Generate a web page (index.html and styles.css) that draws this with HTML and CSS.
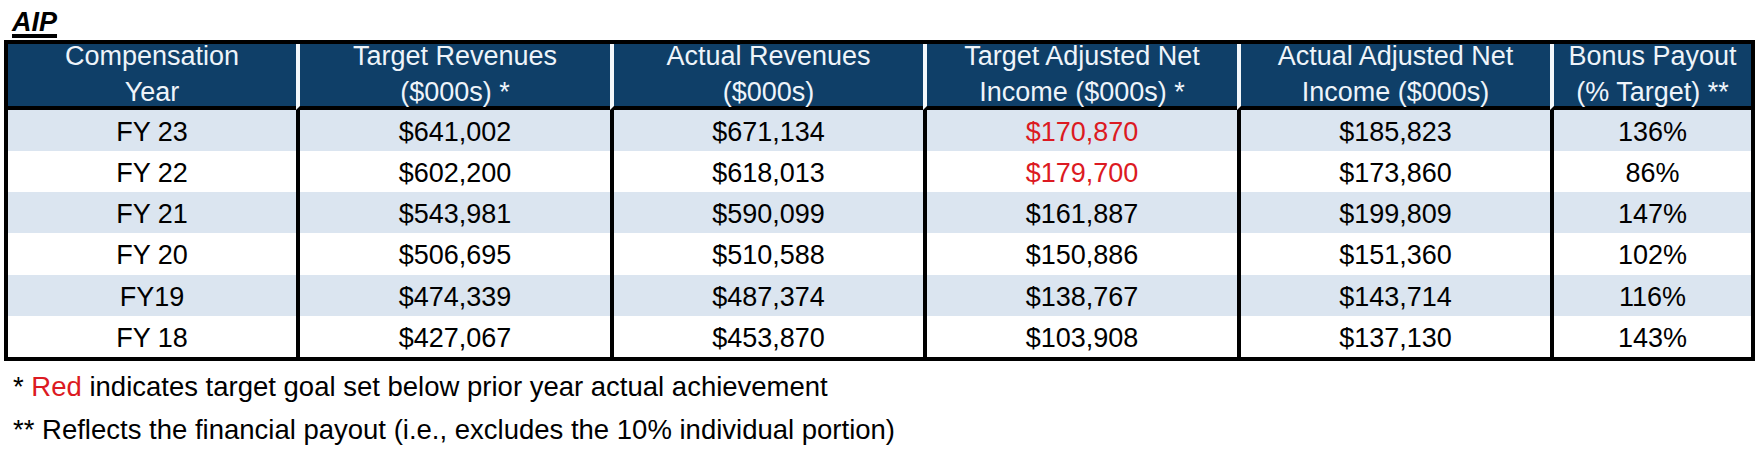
FILE: index.html
```html
<!DOCTYPE html>
<html>
<head>
<meta charset="utf-8">
<link rel="stylesheet" href="styles.css">
</head>
<body>
<div class="page">
  <div class="title">AIP</div>
  <div class="table">
    <div class="th">Compensation<br>Year</div>
    <div class="th sep">Target Revenues<br>($000s) *</div>
    <div class="th sep">Actual Revenues<br>($000s)</div>
    <div class="th sep">Target Adjusted Net<br>Income ($000s) *</div>
    <div class="th sep">Actual Adjusted Net<br>Income ($000s)</div>
    <div class="th sep">Bonus Payout<br>(% Target) **</div>

    <div class="td alt">FY 23</div>
    <div class="td alt sep">$641,002</div>
    <div class="td alt sep">$671,134</div>
    <div class="td alt sep red">$170,870</div>
    <div class="td alt sep">$185,823</div>
    <div class="td alt sep">136%</div>

    <div class="td">FY 22</div>
    <div class="td sep">$602,200</div>
    <div class="td sep">$618,013</div>
    <div class="td sep red">$179,700</div>
    <div class="td sep">$173,860</div>
    <div class="td sep">86%</div>

    <div class="td alt">FY 21</div>
    <div class="td alt sep">$543,981</div>
    <div class="td alt sep">$590,099</div>
    <div class="td alt sep">$161,887</div>
    <div class="td alt sep">$199,809</div>
    <div class="td alt sep">147%</div>

    <div class="td">FY 20</div>
    <div class="td sep">$506,695</div>
    <div class="td sep">$510,588</div>
    <div class="td sep">$150,886</div>
    <div class="td sep">$151,360</div>
    <div class="td sep">102%</div>

    <div class="td alt">FY19</div>
    <div class="td alt sep">$474,339</div>
    <div class="td alt sep">$487,374</div>
    <div class="td alt sep">$138,767</div>
    <div class="td alt sep">$143,714</div>
    <div class="td alt sep">116%</div>

    <div class="td">FY 18</div>
    <div class="td sep">$427,067</div>
    <div class="td sep">$453,870</div>
    <div class="td sep">$103,908</div>
    <div class="td sep">$137,130</div>
    <div class="td sep">143%</div>
  </div>
  <div class="notes">
    <p class="note">* <span class="red">Red</span> indicates target goal set below prior year actual achievement</p>
    <p class="note">** Reflects the financial payout (i.e., excludes the 10% individual portion)</p>
  </div>
</div>
</body>
</html>
```
FILE: styles.css
```css
html, body {
  margin: 0;
  padding: 0;
  background: #ffffff;
}

body {
  font-family: "Liberation Sans", Arial, sans-serif;
  color: #000;
  width: 1763px;
  height: 461px;
  overflow: hidden;
}

.page {
  padding: 0 8px 0 4px;
}

.title {
  font-size: 27px;
  font-weight: bold;
  font-style: italic;
  line-height: 32px;
  padding: 6px 0 0 8px;
  margin-bottom: 2px;
  text-decoration: underline;
  text-decoration-thickness: 4px;
  text-underline-offset: 3px;
}

.table {
  width: 1751px;
  box-sizing: border-box;
  border: 4px solid #000;
  display: grid;
  grid-template-columns: 288px 314px 313px 314px 313px 201px;
  grid-template-rows: 66px repeat(6, 41.17px);
  font-size: 27px;
}

.th {
  background: #0f3f68;
  color: #eef4fa;
  line-height: 36px;
  text-align: center;
  display: flex;
  flex-direction: column;
  justify-content: center;
  padding-bottom: 3px;
  border-bottom: 4px solid #000;
  box-sizing: content-box;
  height: 59px;
  overflow: visible;
  white-space: nowrap;
}

.th.sep {
  border-left: 4px solid #f4f8fb;
}

.td {
  background: #ffffff;
  text-align: center;
  line-height: 38px;
  padding-top: 3px;
  box-sizing: border-box;
  white-space: nowrap;
}

.td.alt {
  background: #dbe5f0;
}

.td.sep {
  border-left: 4px solid #000;
}

.red {
  color: #dc1a22;
}

.notes {
  padding: 4px 0 0 9px;
}

.note {
  margin: 0;
  font-size: 27.5px;
  line-height: 43px;
  white-space: nowrap;
}
```
